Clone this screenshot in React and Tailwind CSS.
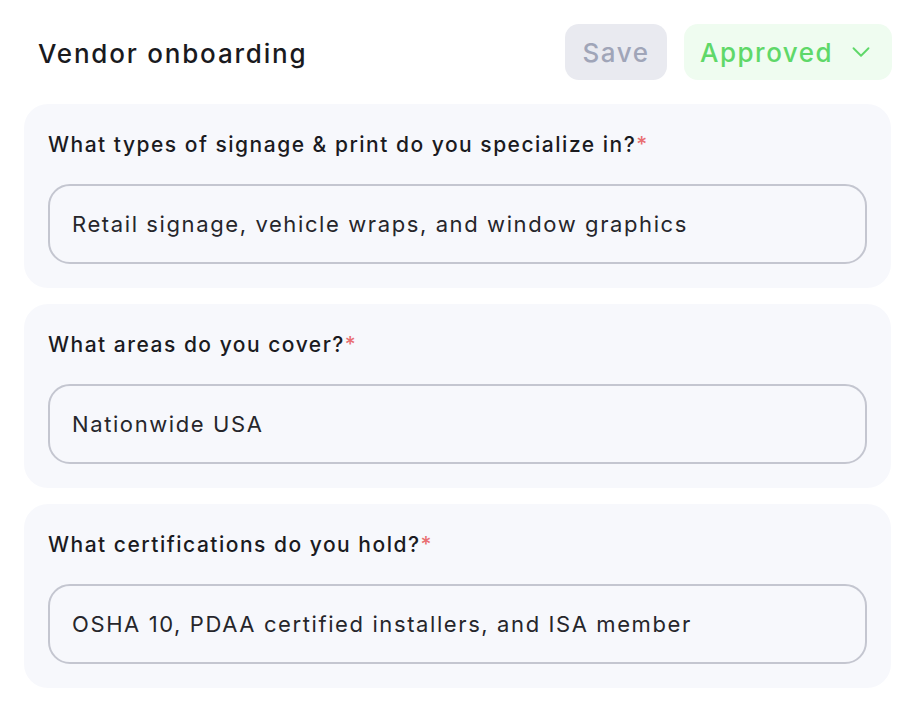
import { ChevronDown } from "lucide-react";

const questions = [
  {
    id: 1,
    label: "What types of signage & print do you specialize in?",
    value: "Retail signage, vehicle wraps, and window graphics",
  },
  {
    id: 2,
    label: "What areas do you cover?",
    value: "Nationwide USA",
  },
  {
    id: 3,
    label: "What certifications do you hold?",
    value: "OSHA 10, PDAA certified installers, and ISA member",
  },
];

function App() {
  return (
    <div
      className="w-[916px] h-[712px] bg-white px-6 pt-6"
      style={{ fontFamily: "Inter, 'Noto Sans', sans-serif" }}
    >
      <header className="flex items-center h-14 mb-6">
        <h1 className="pl-[14px] pt-[3px] text-[26px] font-medium text-[#1a1a1e] tracking-[1.8px]">
          Vendor onboarding
        </h1>
        <div className="ml-auto flex items-center gap-[17px]">
          <button className="h-14 w-[102px] rounded-[14px] bg-[#e9eaf0] text-[26px] font-medium tracking-[1.5px] text-[#a0a5b8]">
            Save
          </button>
          <button className="h-14 w-[208px] rounded-[14px] bg-[#effcf0] flex items-center pl-[16px] pr-[16px] text-[26px] font-medium tracking-[1.5px] text-[#5fd869]">
            Approved
            <ChevronDown className="ml-auto" size={30} strokeWidth={1.5} />
          </button>
        </div>
      </header>

      <div className="flex flex-col gap-4 w-[867px]">
        {questions.map((q) => (
          <section key={q.id} className="rounded-[24px] bg-[#f7f8fc] p-6">
            <label className="block h-[30px] leading-[30px] pt-[2px] text-[21px] font-medium tracking-[1.5px] text-[#1b1b1f]">
              {q.label}
              <span className="text-[#e96f72]">*</span>
            </label>
            <div className="mt-[26px] h-20 rounded-[22px] border-2 border-[#c4c6d0] flex items-center px-[22px] text-[22px] tracking-[1.6px] text-[#26262b]">
              {q.value}
            </div>
          </section>
        ))}
      </div>
    </div>
  );
}

export default App;
